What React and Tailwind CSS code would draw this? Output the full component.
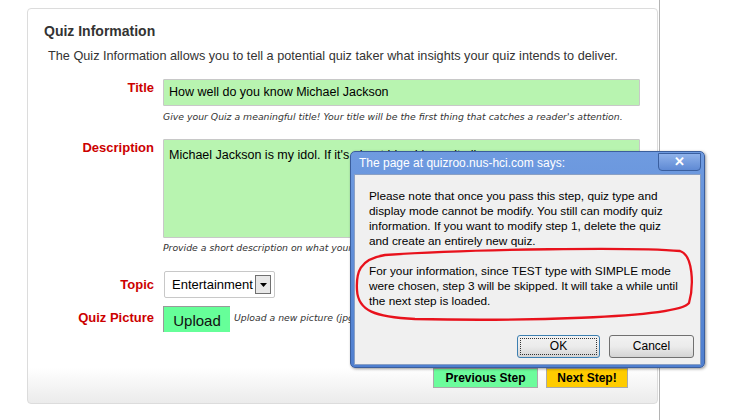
import React from "react";

function Field({ label, children, className = "", labelClass = "" }) {
    return (
        <div className={`flex ${className}`}>
            <div className={`w-[126px] shrink-0 text-right text-[13px] leading-[18px] font-bold text-[#cc0000] font-['Liberation_Sans',sans-serif] ${labelClass}`}>
                {label}
            </div>
            <div className="ml-[9px] flex-1">{children}</div>
        </div>
    );
}

function AlertDialog() {
    return (
        <div className="absolute left-[350px] top-[151px] w-[355px] h-[217px] rounded-[5px] border border-[#3b5e9c] bg-gradient-to-b from-[#6f9be0] to-[#4f7fcf] p-[3px] pt-0 shadow-[1px_1px_3px_rgba(0,0,0,0.4)] font-['Liberation_Sans',sans-serif]">
            {/* TITLE BAR */}
            <div className="flex items-center justify-between h-[22px] pl-[5px]">
                <span className="text-white text-[12px]">The page at quizroo.nus-hci.com says:</span>
                <div className="w-[43px] h-[18px] -mt-[3px] rounded-b-[4px] border border-[#3a5f9f] bg-gradient-to-b from-[#8fb2ea] to-[#5f8ad4] flex items-center justify-center text-white text-[13px] font-bold leading-none">
                    ✕
                </div>
            </div>

            {/* BODY */}
            <div className="relative h-[191px] bg-[#f0f0f0] border border-[#8aa0c4] text-[11.8px] leading-[15px] text-black px-[14px] pt-[14px] whitespace-nowrap">
                <p>
                    Please note that once you pass this step, quiz type and<br />
                    display mode cannot be modify. You still can modify quiz<br />
                    information. If you want to modify step 1, delete the quiz<br />
                    and create an entirely new quiz.
                </p>
                <p className="mt-[15px]">
                    For your information, since TEST type with SIMPLE mode<br />
                    were chosen, step 3 will be skipped. It will take a while until<br />
                    the next step is loaded.
                </p>

                {/* hand-drawn highlight */}
                <svg className="absolute left-0 top-[70px]" width="342" height="80" viewBox="0 0 342 80">
                    <path
                        d="M30 10 C 120 4, 280 2, 325 6 C 338 10, 339 40, 334 58 C 322 74, 150 76, 60 74 C 20 72, 3 66, 2 45 C 1 28, 4 14, 30 10 Z"
                        fill="none"
                        stroke="#e8121c"
                        strokeWidth="2.3"
                    />
                </svg>

                <div className="absolute left-[162px] top-[160px] flex gap-[9px]">
                    <button className="w-[83px] h-[23px] rounded-[3px] border border-[#3c7fb1] bg-gradient-to-b from-[#f2f2f2] via-[#ebebeb] to-[#d4d4d4] text-[12px] outline outline-1 outline-dotted outline-offset-[-4px] outline-[#333]">
                        OK
                    </button>
                    <button className="w-[85px] h-[23px] rounded-[3px] border border-[#707070] bg-gradient-to-b from-[#f2f2f2] via-[#ebebeb] to-[#d4d4d4] text-[12px]">
                        Cancel
                    </button>
                </div>
            </div>
        </div>
    );
}

export default function App() {
    return (
        <div className="relative w-[733px] h-[420px] bg-white overflow-hidden font-['Liberation_Sans',sans-serif] text-[#222]">
            <div className="flex h-full">
                {/* PANEL */}
                <div className="ml-[27px] mt-[8px] w-[631px] h-[396px] rounded-[4px] border border-[#dcdcdc] bg-gradient-to-b from-white from-[91%] to-[#ebebeb] flex flex-col">
                    <h2 className="ml-[16px] mt-[13px] text-[14px] font-bold text-[#333] leading-[18px]">Quiz Information</h2>
                    <p className="ml-[20px] mt-[9px] text-[12.7px] leading-[15px] text-[#333]">
                        The Quiz Information allows you to tell a potential quiz taker what insights your quiz intends to deliver.
                    </p>

                    {/* TITLE */}
                    <Field label="Title" className="mt-[15px]">
                        <div className="w-[477px] h-[27px] bg-[#b8f4b0] border border-[#c8c8c8] rounded-[1px] px-[5px] flex items-center text-[12.5px] text-black">
                            How well do you know Michael Jackson
                        </div>
                        <p className="mt-[5px] text-[9.3px] leading-[12px] italic text-[#333] font-['DejaVu_Sans',sans-serif]">
                            Give your Quiz a meaningful title! Your title will be the first thing that catches a reader's attention.
                        </p>
                    </Field>

                    {/* DESCRIPTION */}
                    <Field label="Description" className="mt-[16px]">
                        <div className="w-[477px] h-[99px] bg-[#b8f4b0] border border-[#c8c8c8] rounded-[1px] px-[5px] pt-[6px] text-[12.5px] text-black whitespace-nowrap overflow-hidden">
                            Michael Jackson is my idol. If it's about him, I know it all.
                        </div>
                        <p className="mt-[4px] text-[9.3px] leading-[12px] italic text-[#333] font-['DejaVu_Sans',sans-serif]">
                            Provide a short description on what your quiz is about.
                        </p>
                    </Field>

                    {/* TOPIC */}
                    <Field label="Topic" className="mt-[17px] items-center">
                        <div className="ml-[1px] w-[111px] h-[27px] border border-[#c8c8c8] rounded-[2px] bg-white flex items-center pl-[7px] text-[13px] text-black">
                            <span className="flex-1">Entertainment</span>
                            <span className="mr-[3px] w-[16px] h-[19px] border border-[#707070] bg-[#e8e8e8] flex items-center justify-center">
                                <svg width="7" height="4" viewBox="0 0 7 4"><path d="M0 0 H7 L3.5 4 Z" fill="#000" /></svg>
                            </span>
                        </div>
                    </Field>

                    {/* QUIZ PICTURE */}
                    <Field label="Quiz Picture" className="mt-[8px]" labelClass="pt-[3px]">
                        <div className="flex items-start">
                            <div className="w-[67px] h-[26px] bg-[#66ff99] border-l border-t border-[#999] flex items-end justify-center text-[15px] text-[#111] leading-[22px]">
                                Upload
                            </div>
                            <span className="ml-[4px] mt-[6px] text-[9.3px] leading-[12px] italic text-[#333] whitespace-nowrap font-['DejaVu_Sans',sans-serif]">
                                Upload a new picture (jpg, gif or png)
                            </span>
                        </div>
                    </Field>

                    {/* STEP BUTTONS */}
                    <div className="mt-[36px] ml-[405px] flex gap-[8px]">
                        <button className="w-[105px] h-[20px] bg-[#6cfc9c] border border-[#aaa] text-[12px] font-bold text-black">
                            Previous Step
                        </button>
                        <button className="w-[82px] h-[20px] bg-[#ffcc00] border border-[#aaa] text-[12px] font-bold text-black">
                            Next Step!
                        </button>
                    </div>
                </div>
                <div className="ml-[1px] w-px h-full bg-[#b4b4b4]" />
            </div>

            <AlertDialog />
        </div>
    );
}
